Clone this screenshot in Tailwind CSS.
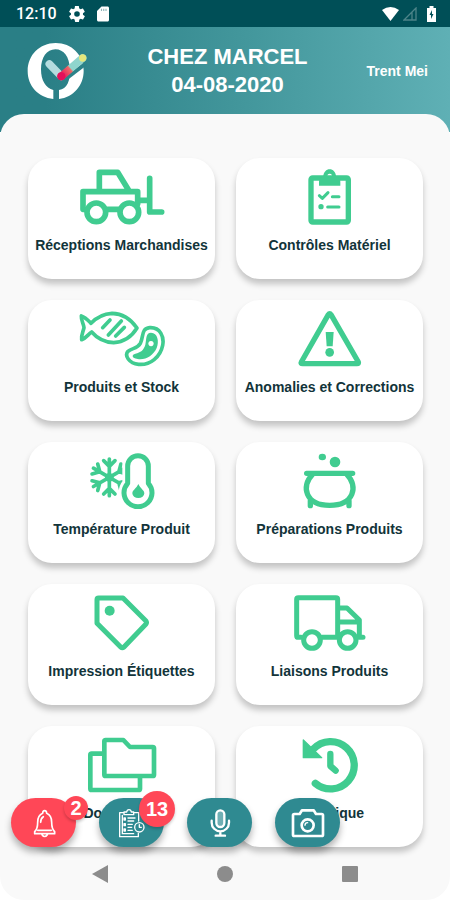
<!DOCTYPE html>
<html lang="fr">
<head>
    <meta charset="UTF-8">
    <meta name="viewport" content="width=device-width, initial-scale=1.0">
    <title>Chez Marcel</title>
    <script src="https://cdn.jsdelivr.net/npm/@tailwindcss/browser@4"></script>
</head>
<body class="bg-white font-['Liberation_Sans',Arial,sans-serif]">
<div class="min-h-screen flex flex-col">

    <!-- Status bar -->
    <div class="bg-[#004f57] text-white h-[27px] pl-4 pr-3.5 flex items-center justify-between">
        <div class="flex items-center gap-3">
            <span class="font-['Roboto',sans-serif] font-medium text-base leading-5">12:10</span>
            <svg class="w-4 h-4" viewBox="2 2 20 20" fill="currentColor"><path d="M19.4 13c0-.3.1-.6.1-1s0-.7-.1-1l2.1-1.6c.2-.2.3-.4.1-.6l-2-3.500c-.1-.2-.4-.3-.6-.2l-2.500 1a7 7 0 0 0-1.700-1l-.4-2.600c0-.3-.2-.5-.5-.5h-4c-.2 0-.5.2-.5.4l-.3 2.700c-.6.2-1.200.6-1.700 1l-2.500-1c-.2-.1-.5 0-.6.2l-2 3.500c-.1.2-.1.5.1.6L4.500 11a8 8 0 0 0 0 2l-2.100 1.600c-.2.2-.3.4-.1.6l2 3.500c.1.2.4.3.6.2l2.500-1c.5.4 1.100.7 1.700 1l.4 2.600c0 .3.200.5.5.5h4c.2 0 .5-.2.5-.4l.4-2.700c.6-.2 1.100-.6 1.700-1l2.500 1c.2.100.5 0 .6-.2l2-3.500c.100-.2.100-.5-.1-.6L19.400 13ZM12 15.500a3.500 3.500 0 1 1 0-7 3.500 3.500 0 0 1 0 7Z"/></svg>
            <svg class="w-3 h-4" viewBox="4 2 16 20" fill="currentColor"><path d="M18 2h-8L4 8v12c0 1.100.9 2 2 2h12c1.100 0 2-.9 2-2V4c0-1.100-.9-2-2-2Z"/><path d="M10 5v3M13 5v3M16 5v3" stroke="#8fb5b8" stroke-width="1.500"/></svg>
        </div>
        <div class="flex items-center gap-1">
            <svg class="w-[17px] h-[14px]" viewBox="0 0 17 14" fill="currentColor"><path d="M0 3Q8.500-3 17 3L8.500 14Z"/></svg>
            <svg class="w-[14px] h-[14px]" viewBox="0 0 14 14" fill="none" stroke="#4d8489" stroke-width="1.300"><path d="M1 13H13V1ZM9 5V13"/></svg>
            <svg class="w-[9px] h-4 ml-1.5" viewBox="0 0 9 16"><path d="M2.500 0h4v2H9v14H0V2h2.500Z" fill="currentColor"/><path d="M5 4L2.500 9H4v4L6.500 8H5Z" fill="#004f57"/></svg>
        </div>
    </div>

    <!-- Header -->
    <header class="bg-linear-to-r from-[#2a7f86] from-10% via-[#43979c] via-55% to-[#5fb0b5] text-white pt-4 pb-[33px] pl-[27px] pr-[22px] grid grid-cols-[1fr_auto_1fr] items-center">
        <svg class="w-[60px] h-14" viewBox="80 128 180 168" fill="none">
            <path fill="#fff" fill-rule="evenodd" d="M166 128C214 128 250 164 250 211C250 256 219 290 176 296V269C200 266 211 240 209 205C207 170 191 147 165 147C139 147 122 172 122 207C122 240 136 264 159 269V296C113 291 82 257 82 212C82 164 118 128 166 128Z"/>
            <path d="M186 243L258 188" stroke="#2d8389" stroke-width="12"/>
            <path d="M147 191L183 228" stroke="#b5dcdf" stroke-width="23" stroke-linecap="round"/>
            <path d="M183 228L247 173" stroke="url(#tick)" stroke-width="23" stroke-linecap="round"/>
            <circle cx="247" cy="173" r="11" fill="#e5e77c"/>
            <circle cx="183" cy="228" r="12" fill="#e3105a"/>
            <defs>
                <linearGradient id="tick" gradientUnits="userSpaceOnUse" x1="183" y1="228" x2="247" y2="173">
                    <stop offset="0" stop-color="#e3105a"/>
                    <stop offset=".4" stop-color="#ef6a67"/>
                    <stop offset=".45" stop-color="#8fd5cd"/>
                    <stop offset="1" stop-color="#8fd5cd"/>
                </linearGradient>
            </defs>
        </svg>
        <h1 class="text-center font-bold text-[22px] leading-7">CHEZ MARCEL<br>04-08-2020</h1>
        <p class="text-right font-bold text-sm">Trent Mei</p>
    </header>

    <!-- Content -->
    <main class="bg-[#f9f9f9] rounded-3xl -mt-[18px] pt-11 flex-1 flex flex-col">
        <div class="relative">
            <div class="grid grid-cols-2 gap-[21px] pl-7 pr-[27px] text-[#12343a]">

                <a href="#" class="bg-white rounded-3xl shadow-[0_5px_6px_rgba(0,0,0,0.22)] pt-[11px] pb-6 flex flex-col items-center gap-2.5">
                    <svg class="w-[86px] h-14 text-[#40cc90]" viewBox="176 56 258 168" fill="none" stroke="currentColor" stroke-width="17" stroke-linecap="round" stroke-linejoin="round">
                        <path d="M237 120V66H292L325 120M192 177H188V124H352V160M262 177H295M358 150H385M388 84V185H424"/>
                        <circle cx="228" cy="186" r="28"/><circle cx="327" cy="186" r="28"/>
                    </svg>
                    <span class="text-sm leading-5 font-bold whitespace-nowrap">Réceptions Marchandises</span>
                </a>

                <a href="#" class="bg-white rounded-3xl shadow-[0_5px_6px_rgba(0,0,0,0.22)] pt-[11px] pb-6 flex flex-col items-center gap-2.5">
                    <svg class="w-[86px] h-14 text-[#40cc90]" viewBox="170 56 258 168" fill="none" stroke="currentColor" stroke-linecap="round" stroke-linejoin="round">
                        <rect x="242" y="83" width="112" height="132" rx="5" stroke-width="16"/>
                        <path fill="currentColor" stroke="none" fill-rule="evenodd" d="M266 106V94Q266 82 278 80C280 65 288 57 298 57C308 57 316 65 318 80Q330 82 330 94V106ZM298 70a7 7 0 1 0 .1 0Z"/>
                        <path stroke-width="9" d="M267 136L276 144L293 127M306 139H326M292 170H326"/>
                        <circle cx="272" cy="169" r="8" fill="currentColor" stroke="none"/>
                    </svg>
                    <span class="text-sm leading-5 font-bold whitespace-nowrap">Contrôles Matériel</span>
                </a>

                <a href="#" class="bg-white rounded-3xl shadow-[0_5px_6px_rgba(0,0,0,0.22)] pt-[11px] pb-6 flex flex-col items-center gap-2.5">
                    <svg class="w-[86px] h-14 text-[#40cc90]" viewBox="176 47 258 168" fill="none" stroke="currentColor" stroke-width="11" stroke-linecap="round" stroke-linejoin="round">
                        <path d="M183 62C182 76 190 85 191 97C189 109 182 118 184 133C198 128 204 116 214 110Q240 140 280 142Q325 139 350 98Q320 55 275 54Q238 56 212 84C204 76 196 66 183 62Z"/>
                        <path d="M247 97L269 74M264 119L303 77M286 122L312 96"/>
                        <path d="M388 97C420 95 432 125 427 150C420 185 390 210 355 207C325 204 312 180 323 168C335 157 350 162 360 144C370 125 362 99 388 97Z"/>
                        <path fill="currentColor" stroke="none" fill-rule="evenodd" d="M392 112C412 112 417 138 409 158C399 181 375 195 352 191C333 188 334 178 345 175C361 171 370 165 375 148C379 130 376 112 392 112ZM392 137a8 8 0 1 0 .1 0Z"/>
                    </svg>
                    <span class="text-sm leading-5 font-bold whitespace-nowrap">Produits et Stock</span>
                </a>

                <a href="#" class="bg-white rounded-3xl shadow-[0_5px_6px_rgba(0,0,0,0.22)] pt-[11px] pb-6 flex flex-col items-center gap-2.5">
                    <svg class="w-[86px] h-14 text-[#40cc90]" viewBox="170 47 258 168" fill="none" stroke="currentColor" stroke-width="16" stroke-linejoin="round">
                        <path d="M294 58Q298 52 302 58L384 200Q386 205 380 205H217Q210 205 213 200Z"/>
                        <path d="M286 110H310L307 153H289Z" fill="currentColor" stroke="none"/>
                        <circle cx="298" cy="171" r="13" fill="currentColor" stroke="none"/>
                    </svg>
                    <span class="text-sm leading-5 font-bold whitespace-nowrap">Anomalies et Corrections</span>
                </a>

                <a href="#" class="bg-white rounded-3xl shadow-[0_5px_6px_rgba(0,0,0,0.22)] pt-[11px] pb-6 flex flex-col items-center gap-2.5">
                    <svg class="w-[86px] h-14 text-[#40cc90]" viewBox="176 47 258 168" fill="none" stroke="currentColor" stroke-width="11" stroke-linecap="round" stroke-linejoin="round">
                        <g id="arm"><path d="M267 120V65M250 70L267 87L284 70"/></g>
                        <use href="#arm" transform="rotate(60 267 120)"/>
                        <use href="#arm" transform="rotate(120 267 120)"/>
                        <use href="#arm" transform="rotate(180 267 120)"/>
                        <use href="#arm" transform="rotate(240 267 120)"/>
                        <use href="#arm" transform="rotate(300 267 120)"/>
                        <circle cx="267" cy="120" r="13" fill="currentColor" stroke="none"/>
                        <path d="M322 138V86A31 31 0 0 1 384 86V138A42 42 0 1 1 322 138Z" fill="#fff" stroke="#fff" stroke-width="32"/>
                        <path d="M322 138V86A31 31 0 0 1 384 86V138A42 42 0 1 1 322 138Z" stroke-width="15"/>
                        <path d="M354 140C360 154 372 158 372 168A18 14 0 0 1 336 168C336 158 348 154 354 140Z" fill="currentColor" stroke="none"/>
                    </svg>
                    <span class="text-sm leading-5 font-bold whitespace-nowrap">Température Produit</span>
                </a>

                <a href="#" class="bg-white rounded-3xl shadow-[0_5px_6px_rgba(0,0,0,0.22)] pt-[11px] pb-6 flex flex-col items-center gap-2.5">
                    <svg class="w-[86px] h-14 text-[#40cc90]" viewBox="170 47 258 168" fill="none" stroke="currentColor" stroke-width="16" stroke-linecap="round">
                        <ellipse cx="276" cy="59" rx="11" ry="10" fill="currentColor" stroke="none"/>
                        <circle cx="314" cy="74" r="16" fill="currentColor" stroke="none"/>
                        <path d="M229 108H367M246 112C212 146 224 204 298 204C372 204 384 146 350 112M240 190V205M356 190V205"/>
                    </svg>
                    <span class="text-sm leading-5 font-bold whitespace-nowrap">Préparations Produits</span>
                </a>

                <a href="#" class="bg-white rounded-3xl shadow-[0_5px_6px_rgba(0,0,0,0.22)] pt-[11px] pb-6 flex flex-col items-center gap-2.5">
                    <svg class="w-[86px] h-14 text-[#40cc90]" viewBox="176 45 258 168" fill="none" stroke="currentColor" stroke-width="15" stroke-linejoin="round">
                        <path d="M235 54H308L377 123Q380 128 377 132L311 201Q306 205 301 201L230 130V59Q230 54 235 54Z"/>
                        <circle cx="268" cy="92" r="15" fill="currentColor" stroke="none"/>
                    </svg>
                    <span class="text-sm leading-5 font-bold whitespace-nowrap">Impression Étiquettes</span>
                </a>

                <a href="#" class="bg-white rounded-3xl shadow-[0_5px_6px_rgba(0,0,0,0.22)] pt-[11px] pb-6 flex flex-col items-center gap-2.5">
                    <svg class="w-[86px] h-14 text-[#40cc90]" viewBox="170 45 258 168" fill="none" stroke="currentColor" stroke-width="15" stroke-linecap="round" stroke-linejoin="round">
                        <path d="M212 172H204Q199 172 199 167V58Q199 53 204 53H317Q322 53 322 58V168M276 172H320M324 84H350L387 120V168M328 126H386M385 172H398"/>
                        <circle cx="245" cy="180" r="25"/><circle cx="352" cy="180" r="25"/>
                    </svg>
                    <span class="text-sm leading-5 font-bold whitespace-nowrap">Liaisons Produits</span>
                </a>

                <a href="#" class="bg-white rounded-3xl shadow-[0_5px_6px_rgba(0,0,0,0.22)] pt-[11px] pb-6 flex flex-col items-center gap-2.5">
                    <svg class="w-[86px] h-14 text-[#40cc90]" viewBox="235 51 258 168" fill="none" stroke="currentColor" stroke-width="14" stroke-linejoin="round">
                        <path d="M315 60H368L388 81H456Q460 81 460 85V164Q460 168 456 168H315Q311 168 311 164V64Q311 60 315 60Z"/>
                        <path d="M309 101H273Q269 101 269 105V206Q269 210 273 210H414Q418 210 418 206V172"/>
                    </svg>
                    <span class="text-sm leading-5 font-bold whitespace-nowrap">Documents</span>
                </a>

                <a href="#" class="bg-white rounded-3xl shadow-[0_5px_6px_rgba(0,0,0,0.22)] pt-[11px] pb-6 flex flex-col items-center gap-2.5">
                    <svg class="w-[86px] h-14 text-[#40cc90]" viewBox="184 51 258 168" fill="none" stroke="currentColor" stroke-width="22" stroke-linecap="round" stroke-linejoin="round">
                        <path d="M263 87A71 71 0 1 1 269 190"/>
                        <path d="M314 102V138L330 152" stroke-width="19"/>
                        <path d="M233 60V113H288Z" fill="currentColor" stroke-width="4"/>
                    </svg>
                    <span class="text-sm leading-5 font-bold whitespace-nowrap">Historique</span>
                </a>
            </div>

            <!-- Floating buttons -->
            <div class="absolute left-[11px] bottom-0 flex gap-[23px] text-white">
                <button type="button" aria-label="Alertes" class="relative w-[65px] h-[49px] rounded-full bg-[#ff4757] shadow-[0_5px_7px_rgba(0,0,0,0.3)] flex items-center justify-center">
                    <svg class="w-[34px] h-[30px]" viewBox="80 267 102 90" fill="none" stroke="currentColor" stroke-width="5" stroke-linecap="round" stroke-linejoin="round">
                        <path d="M127 283Q127 275 133 275Q139 275 139 283C151 288 154 298 154 310C154 325 156 332 163 338V344H103V338C110 332 112 325 112 310C112 298 115 288 127 283ZM125 347Q133 358 141 347M121 310C121 301 124 296 129 293M112 334H153"/>
                    </svg>
                    <span class="absolute -top-0.5 -right-3 w-6 h-6 rounded-full bg-[#ff4757] shadow-[0_2px_3px_rgba(0,0,0,0.2)] font-bold text-xl leading-6">2</span>
                </button>
                <button type="button" aria-label="Tâches" class="relative w-[65px] h-[49px] rounded-full bg-[#2f8a91] shadow-[0_5px_7px_rgba(0,0,0,0.3)] flex items-center justify-center">
                    <svg class="w-[34px] h-[30px]" viewBox="344 267 102 90" fill="none" stroke="currentColor" stroke-width="4" stroke-linecap="round" stroke-linejoin="round">
                        <path d="M371 281H358V353H414V343M400 281H415V306M371 287V279H379Q380 272 386 272Q392 272 393 279H400V287ZM366 289V344H400M383 297H404M383 306H400M383 316H396M383 325H394M383 334H396"/>
                        <path d="M371 297h4v6h-4ZM371 314h4v6h-4ZM371 330h4v6h-4Z"/>
                        <circle cx="417" cy="325" r="14"/><path d="M417 317V325H423"/>
                    </svg>
                    <span class="absolute -top-[7px] -right-[11px] w-9 h-9 rounded-full bg-[#ff4757] shadow-[0_2px_3px_rgba(0,0,0,0.2)] font-bold text-xl leading-9">13</span>
                </button>
                <button type="button" aria-label="Micro" class="w-[65px] h-[49px] rounded-full bg-[#2f8a91] shadow-[0_5px_7px_rgba(0,0,0,0.3)] flex items-center justify-center">
                    <svg class="w-[34px] h-[30px]" viewBox="607 267 102 90" fill="none" stroke="currentColor" stroke-width="7" stroke-linecap="round">
                        <rect x="647" y="274" width="24" height="50" rx="12" fill="#6fafb4"/>
                        <path d="M633 305V311A26 26 0 0 0 685 311V305M659 338V349M645 350H673"/>
                    </svg>
                </button>
                <button type="button" aria-label="Photo" class="w-[65px] h-[49px] rounded-full bg-[#2f8a91] shadow-[0_5px_7px_rgba(0,0,0,0.3)] flex items-center justify-center">
                    <svg class="w-[34px] h-[30px]" viewBox="195 267 102 90" fill="none" stroke="currentColor" stroke-width="8" stroke-linejoin="round">
                        <path d="M205 285H221L228 274H263L270 285H287Q291 285 291 289V347Q291 351 287 351H205Q201 351 201 347V289Q201 285 205 285Z"/>
                        <circle cx="245" cy="319" r="18" stroke-width="8"/>
                        <path d="M237 319A8 8 0 0 1 245 311" stroke-width="4" stroke-linecap="round"/>
                    </svg>
                </button>
            </div>
        </div>

        <!-- System navigation -->
        <nav class="h-[53px] px-[37px] grid grid-cols-3 items-center justify-items-center text-[#8c8c8c]">
            <button type="button" aria-label="Retour"><svg class="w-4 h-[18px]" viewBox="0 0 16 18" fill="currentColor"><path d="M16 0V18L0 9Z"/></svg></button>
            <button type="button" aria-label="Accueil"><svg class="w-4 h-4" viewBox="0 0 16 16" fill="currentColor"><circle cx="8" cy="8" r="8"/></svg></button>
            <button type="button" aria-label="Applications"><svg class="w-4 h-4" viewBox="0 0 16 16" fill="currentColor"><rect width="16" height="16" rx="1"/></svg></button>
        </nav>
    </main>
</div>
</body>
</html>
